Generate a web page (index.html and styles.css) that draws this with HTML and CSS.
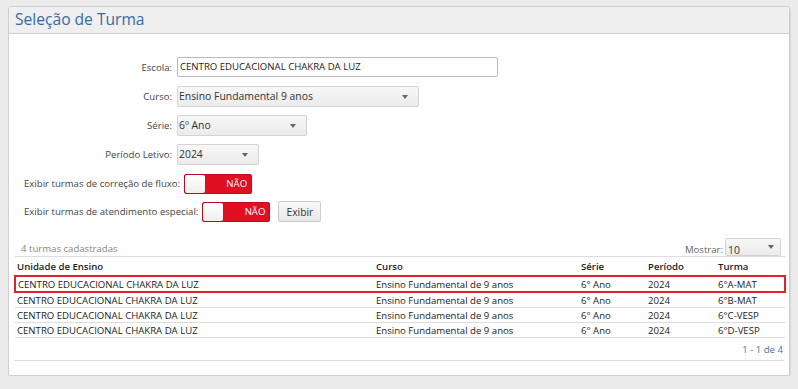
FILE: index.html
```html
<!DOCTYPE html>
<html lang="pt-BR">
<head>
<meta charset="utf-8">
<link rel="stylesheet" href="styles.css">
</head>
<body>
<div class="card">
  <div class="card-head">Seleção de Turma</div>
  <div class="card-body">
    <div class="form">
      <div class="frow"><label class="lbl">Escola:</label><div class="input w-escola">CENTRO EDUCACIONAL CHAKRA DA LUZ</div></div>
      <div class="frow"><label class="lbl">Curso:</label><div class="select w-curso">Ensino Fundamental 9 anos<span class="caret"></span></div></div>
      <div class="frow"><label class="lbl">Série:</label><div class="select w-serie">6º Ano<span class="caret"></span></div></div>
      <div class="frow"><label class="lbl">Período Letivo:</label><div class="select w-periodo">2024<span class="caret"></span></div></div>
    </div>
    <div class="trow t1"><span class="tlbl">Exibir turmas de correção de fluxo:</span><div class="toggle"><span class="knob"></span><span class="nao">NÃO</span></div></div>
    <div class="trow t2"><span class="tlbl">Exibir turmas de atendimento especial:</span><div class="toggle"><span class="knob"></span><span class="nao">NÃO</span></div><button class="btn">Exibir</button></div>
    <div class="tbar"><span class="count">4 turmas cadastradas</span><span class="show">Mostrar: <span class="mini">10<span class="caret"></span></span></span></div>
    <table class="grid">
      <thead><tr><th class="c1">Unidade de Ensino</th><th class="c2">Curso</th><th class="c3">Série</th><th class="c4">Período</th><th class="c5">Turma</th></tr></thead>
      <tbody>
        <tr class="sel"><td>CENTRO EDUCACIONAL CHAKRA DA LUZ</td><td>Ensino Fundamental de 9 anos</td><td>6° Ano</td><td>2024</td><td>6°A-MAT</td></tr>
        <tr><td>CENTRO EDUCACIONAL CHAKRA DA LUZ</td><td>Ensino Fundamental de 9 anos</td><td>6° Ano</td><td>2024</td><td>6°B-MAT</td></tr>
        <tr><td>CENTRO EDUCACIONAL CHAKRA DA LUZ</td><td>Ensino Fundamental de 9 anos</td><td>6° Ano</td><td>2024</td><td>6°C-VESP</td></tr>
        <tr><td>CENTRO EDUCACIONAL CHAKRA DA LUZ</td><td>Ensino Fundamental de 9 anos</td><td>6° Ano</td><td>2024</td><td>6°D-VESP</td></tr>
      </tbody>
    </table>
    <div class="pager">1 - 1 de 4</div>
  </div>
</div>
</body>
</html>
```
FILE: styles.css
```css
html, body { margin: 0; padding: 0; }
body {
  background: #ebebeb;
  font-family: "Open Sans", "DejaVu Sans", sans-serif;
  font-size: 9.6px;
  color: #333;
  padding: 6px 6px 0 8px;
}
.card {
  background: #fff;
  border: 1px solid #cfcfcf;
  border-radius: 3px;
  width: 782px;
  height: 370px;
  box-sizing: border-box;
  box-shadow: 1px 1px 1px rgba(0,0,0,0.08);
}
.card-head {
  background: #efefef;
  border-bottom: 1px solid #cfcfcf;
  height: 27px;
  box-sizing: border-box;
  padding: 1px 0 0 6px;
  font-size: 15.6px;
  line-height: 22px;
  color: #3a6aa5;
  border-radius: 3px 3px 0 0;
}
.card-body { padding: 0 6px 0 5px; }
.form { padding-top: 23px; }
.frow { display: flex; align-items: center; height: 20px; margin-bottom: 9px; }
.lbl { width: 158px; text-align: right; padding-right: 5px; color: #444; font-size: 9.6px; }
.input {
  height: 20px; box-sizing: border-box; border: 1px solid #bbb; border-radius: 2px;
  padding: 0 2px; line-height: 18px; font-size: 9.6px; color: #222; background: #fff;
}
.w-escola { width: 321px; }
.select {
  height: 21px; box-sizing: border-box; border: 1px solid #d4d4d4; border-radius: 2px;
  background: linear-gradient(#f7f7f7, #ebebeb);
  padding: 0 1px; line-height: 19px; font-size: 10.4px; color: #333; position: relative;
}
.w-curso { width: 242px; }
.w-serie { width: 130px; }
.w-periodo { width: 82px; }
.caret {
  position: absolute; right: 10px; top: 8px; width: 0; height: 0;
  border-left: 3px solid transparent; border-right: 3px solid transparent; border-top: 4px solid #666;
}
.trow { display: flex; align-items: center; height: 21px; padding-left: 10px; }
.t2 { margin-top: 7px; }
.tlbl { font-size: 9.6px; color: #444; margin-right: 4px; }
.toggle {
  width: 68px; height: 20px; box-sizing: border-box; background: #e20f23; border: 1px solid #c40a1c;
  border-radius: 2px; position: relative; display: flex; align-items: center; justify-content: flex-end;
  padding-right: 4px;
}
.knob {
  position: absolute; left: 0; top: 0; width: 20px; height: 18px; background: linear-gradient(#fff, #eee);
  border-radius: 2px; box-shadow: 0 0 1px rgba(0,0,0,0.4);
}
.nao { color: #fff; font-size: 9.6px; }
.btn {
  margin-left: 8px; height: 21px; width: 43px; box-sizing: border-box; border: 1px solid #ccc;
  border-radius: 2px; background: linear-gradient(#f8f8f8, #e8e8e8); font-family: inherit;
  font-size: 10.2px; color: #333; padding: 0;
}
.tbar { display: flex; justify-content: space-between; align-items: flex-end; margin-top: 17px; height: 17px; padding: 0 2px 0 7px; }
.count { color: #888; font-size: 9.6px; line-height: 14px; }
.show { color: #666; font-size: 9.6px; display: flex; align-items: flex-end; }
.mini {
  display: inline-block; width: 56px; height: 18px; box-sizing: border-box; margin-left: 2px;
  border: 1px solid #d4d4d4; border-radius: 2px; background: linear-gradient(#f7f7f7, #ebebeb);
  position: relative; padding-left: 2px; line-height: 22px; font-size: 10.4px; color: #333; overflow: hidden;
}
.mini .caret { top: 6px; right: 6px; }
.grid { width: 770px; table-layout: fixed; border-collapse: collapse; border-top: 1px solid #ddd; }
.grid th { text-align: left; font-weight: 600; font-size: 9.6px; color: #222; height: 18px; padding: 0 0 0 2px; background: #fff; }
.grid td { height: 14px; padding: 0 0 0 2px; font-size: 9.6px; color: #222; border-top: 1px solid #ddd; line-height: 13px; white-space: nowrap; overflow: hidden; }
.c1 { width: 357px; }
.c2 { width: 203px; }
.c3 { width: 65px; }
.c4 { width: 68px; }
.c5 { width: 67px; }
.grid tr.sel td { border-top: 2px solid #e0202e; border-bottom: 2px solid #e0202e; }
.grid tr.sel td:first-child { border-left: 2px solid #e0202e; }
.grid tr.sel td:last-child { border-right: 2px solid #e0202e; }
.grid tbody tr:last-child td { border-bottom: 1px solid #ddd; }
.pager { width: 770px; text-align: right; color: #4a72a8; font-size: 9.6px; height: 23px; line-height: 23px; border-bottom: 1px solid #ddd; box-sizing: border-box; padding-right: 1px; }
```
